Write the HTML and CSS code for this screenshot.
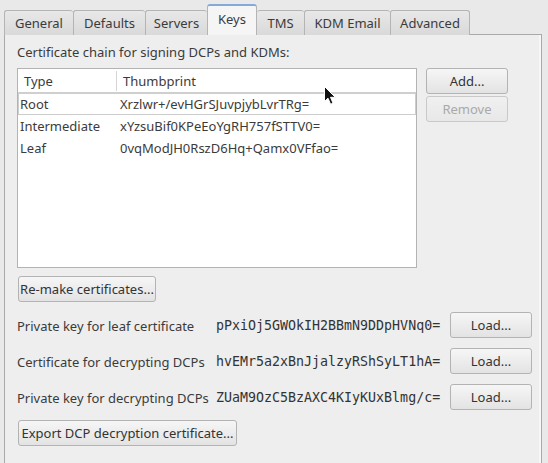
FILE: index.html
```html
<!DOCTYPE html>
<html>
<head>
<meta charset="utf-8">
<link rel="stylesheet" href="styles.css">
</head>
<body>
<div class="window">
  <div class="tabbar">
    <div class="tab t-general">General</div>
    <div class="tab t-defaults">Defaults</div>
    <div class="tab t-servers">Servers</div>
    <div class="tab active t-keys">Keys</div>
    <div class="tab t-tms">TMS</div>
    <div class="tab t-kdm">KDM Email</div>
    <div class="tab t-adv">Advanced</div>
  </div>
  <div class="pane">
    <div class="caption">Certificate chain for signing DCPs and KDMs:</div>
    <div class="chain">
      <div class="list">
        <div class="list-head">
          <div class="hc c1">Type</div>
          <div class="hc c2">Thumbprint</div>
        </div>
        <div class="row focus"><span class="c1">Root</span><span class="c2">Xrzlwr+/evHGrSJuvpjybLvrTRg=</span></div>
        <div class="row"><span class="c1">Intermediate</span><span class="c2">xYzsuBif0KPeEoYgRH757fSTTV0=</span></div>
        <div class="row"><span class="c1">Leaf</span><span class="c2">0vqModJH0RszD6Hq+Qamx0VFfao=</span></div>
      </div>
      <div class="side">
        <div class="btn side-btn">Add...</div>
        <div class="btn side-btn disabled">Remove</div>
      </div>
    </div>
    <div class="btn remake">Re-make certificates...</div>
    <div class="keys">
      <div class="klabel">Private key for leaf certificate</div>
      <div class="kval">pPxiOj5GWOkIH2BBmN9DDpHVNq0=</div>
      <div class="btn load">Load...</div>
      <div class="klabel">Certificate for decrypting DCPs</div>
      <div class="kval">hvEMr5a2xBnJjalzyRShSyLT1hA=</div>
      <div class="btn load">Load...</div>
      <div class="klabel">Private key for decrypting DCPs</div>
      <div class="kval">ZUaM9OzC5BzAXC4KIyKUxBlmg/c=</div>
      <div class="btn load">Load...</div>
    </div>
    <div class="btn export">Export DCP decryption certificate...</div>
  </div>
  <svg class="cursor" width="13" height="20" viewBox="0 0 13 20">
    <path d="M0.5 0.5 L0.5 15.5 L4 12.2 L6.6 18.2 L9 17.2 L6.5 11.3 L11.3 11.3 Z" fill="#111" stroke="#fff" stroke-width="1"/>
  </svg>
</div>
</body>
</html>
```
FILE: styles.css
```css
* { box-sizing: border-box; }
html, body { margin: 0; padding: 0; }
body {
  background: #e9e9e9;
  font-family: "Noto Sans", "Open Sans", sans-serif;
  font-size: 13px;
  color: #3b3b3b;
  width: 548px;
  height: 463px;
  overflow: hidden;
}
.window {
  position: relative;
  padding: 4px 6px 0 4px;
}
.tabbar {
  display: flex;
  align-items: flex-end;
  height: 31px;
  position: relative;
  z-index: 2;
  margin-bottom: -1px;
}
.tab {
  height: 25px;
  border: 1px solid #b4b4b4;
  border-bottom: none;
  border-right: none;
  border-radius: 3px 3px 0 0;
  background: linear-gradient(#e8e8e8, #d9d9d9);
  display: flex;
  align-items: center;
  justify-content: center;
  color: #3b3b3b;
  padding-bottom: 1px;
}
.t-general { width: 69px; }
.t-defaults { width: 72px; }
.t-servers { width: 62px; }
.t-keys { width: 50px; }
.t-tms { width: 47px; border-left: none; }
.t-kdm { width: 86px; }
.t-adv { width: 80px; border-right: 1px solid #b4b4b4; }
.tab.active {
  height: 31px;
  background: #f5f5f5;
  border: 1px solid #b4b4b4;
  border-top: 2px solid #86a9d8;
  border-bottom: none;
  padding-bottom: 3px;
}
.pane {
  border: 1px solid #a9a9a9;
  background: #eeeeee;
  height: 440px;
  padding: 8px 9px 0 12px;
  box-shadow: inset -2px 0 0 #f7f7f7;
}
.caption {
  height: 18px;
  line-height: 18px;
}
.chain {
  display: flex;
  gap: 9px;
  margin-top: 7px;
}
.list {
  width: 400px;
  height: 200px;
  background: #ffffff;
  border: 1px solid #b3b3b3;
}
.list-head {
  display: flex;
  height: 25px;
  border-bottom: 2px solid #cfcfcf;
  align-items: center;
}
.hc { line-height: 20px; }
.list-head .c1 {
  width: 99px;
  padding-left: 6px;
  border-right: 1px solid #d5d5d5;
}
.list-head .c2 { padding-left: 6px; }
.row {
  display: flex;
  height: 22px;
  align-items: center;
  border-bottom: 1px solid transparent;
}
.row .c1 { width: 102px; padding-left: 2px; }
.row.focus {
  border: 1px solid #cdcdcd;
  border-top: none;
  height: 21px;
}
.row.focus .c1 { padding-left: 1px; width: 101px; }
.side {
  display: flex;
  flex-direction: column;
  gap: 2px;
}
.btn {
  height: 26px;
  border: 1px solid #b3b3b3;
  border-radius: 3px;
  background: linear-gradient(#f6f6f6, #e3e3e3);
  display: flex;
  align-items: center;
  justify-content: center;
  color: #333;
}
.side-btn { width: 82px; }
.btn.disabled {
  color: #a9a9a9;
  border-color: #c9c9c9;
  background: linear-gradient(#f0f0f0, #e8e8e8);
}
.remake {
  width: 138px;
  margin: 8px 0 0 1px;
}
.keys {
  display: grid;
  grid-template-columns: 199px 1fr 82px;
  grid-auto-rows: 26px;
  row-gap: 10px;
  align-items: center;
  margin-top: 10px;
}
.kval {
  font-family: "DejaVu Sans Mono", monospace;
  font-size: 13.3px;
  color: #333;
}
.klabel { margin-top: 1px; }
.load { width: 82px; }
.export {
  width: 219px;
  margin: 10px 0 0 1px;
}
.cursor {
  position: absolute;
  left: 324px;
  top: 86px;
}
```
